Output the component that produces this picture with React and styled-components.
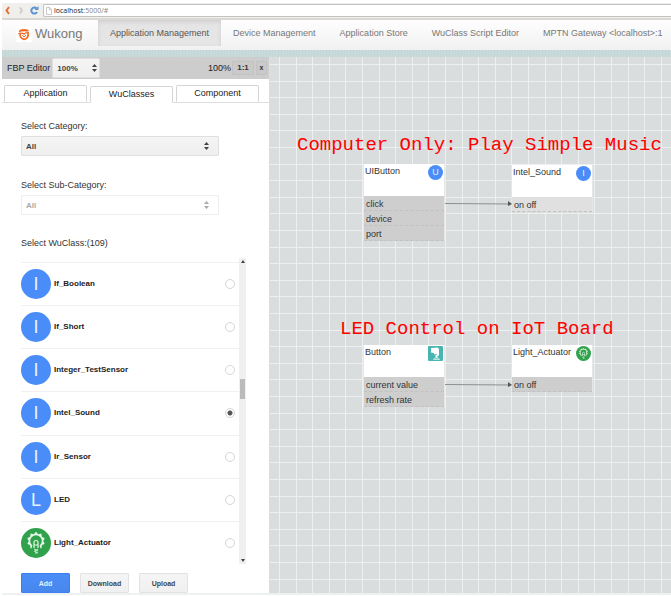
import React, { useState } from "react";
import styled, { createGlobalStyle, css } from "styled-components";

const Global = createGlobalStyle`
  *, *::before, *::after { box-sizing: border-box; }
  body { margin: 0; background: #fff; color: #333; font: 12px/16px "Liberation Sans", Arial, sans-serif; overflow: hidden; }
  button, select, input { font-family: inherit; margin: 0; }
`;

const Page = styled.div`
  display: flex;
  flex-direction: column;
  height: 100vh;
  padding: 3px 0 1px 2px;
`;

const BrowserBar = styled.header`
  display: flex;
  align-items: center;
  height: 17px;
  padding: 0 0 0 3px;
  background: #f1efec;
  border-bottom: 2px solid #d9d8d6;
`;

const ToolButton = styled.button`
  display: flex;
  padding: 0;
  border: 0;
  margin-right: 4px;
  background: none;
`;

const Address = styled.div`
  display: flex;
  align-items: center;
  flex: 1;
  height: 13px;
  padding-left: 2px;
  background: #fff;
  border: 1px solid #c4c3c1;
  border-right: 0;
  border-radius: 2px 0 0 2px;
  font: 7px/11px "Open Sans", sans-serif;
  color: #888;
`;

const AddressText = styled.span`
  margin-left: 2px;
  b { font-weight: 400; color: #222; }
`;

const Navbar = styled.nav`
  display: flex;
  flex: none;
  height: 30px;
  padding-left: 14px;
  background: linear-gradient(#fefefe, #f1f1f1);
  overflow: hidden;
`;

const Brand = styled.a`
  display: flex;
  align-items: center;
  flex: none;
  gap: 3px;
  width: 82px;
  padding-bottom: 2px;
  color: #777;
  font-size: 13px;
  text-decoration: none;
`;

const NavLink = styled.a`
  height: 26px;
  padding: 0 12px;
  color: ${(p) => (p.$active ? "#555" : "#777")};
  font-size: 9px;
  line-height: 26px;
  white-space: nowrap;
  text-decoration: none;
  ${(p) => p.$active && css`
    background: #e5e5e5;
    box-shadow: inset 0 2px 4px rgba(0, 0, 0, 0.1);
  `}
`;

const Strip = styled.div`
  flex: none;
  height: 7px;
  background: repeating-linear-gradient(90deg, #c4d5d5 0 1px, #c9dada 1px 3px);
`;

const Workspace = styled.main`
  display: grid;
  grid-template-columns: 268px minmax(0, 1fr);
  flex: 1;
  min-height: 0;
  border-bottom: 2px solid #eef1f1;
`;

const Sidebar = styled.aside`
  display: flex;
  flex-direction: column;
  min-width: 0;
  min-height: 0;
  background: #fff;
  border-right: 1px solid #ddd;
`;

const EditorBar = styled.div`
  display: flex;
  align-items: center;
  height: 22px;
  padding: 0 2px 0 5px;
  background: #cdcdcd;
  color: #222;
  font-size: 9px;
`;

const Spacer = styled.div`
  flex: 1;
`;

const SelectBox = styled.div`
  display: grid;
  grid-template-columns: minmax(0, 1fr) auto;
  align-items: center;
  width: ${(p) => p.$width};
  height: 20px;
  margin-left: ${(p) => (p.$inline ? "2px" : "0")};
  padding-right: ${(p) => (p.$inline ? "2px" : "9px")};
  border: 1px solid ${(p) => (p.$muted ? "#eee" : "#dfdfdf")};
  border-radius: 1px;
  background: ${(p) => (p.$muted ? "#fff" : "linear-gradient(#f4f4f4, #efefef)")};
  color: ${(p) => (p.$muted ? "#aaa" : "#444")};
`;

const Select = styled.select`
  grid-area: 1 / 1 / 2 / 3;
  width: 100%;
  height: 18px;
  padding: 0 4px;
  border: 0;
  background: none;
  appearance: none;
  color: inherit;
  opacity: 1;
  font-size: 8px;
  font-weight: 700;
`;

const Arrows = styled.svg`
  grid-area: 1 / 2 / 2 / 3;
  width: 5px;
  height: 8px;
  fill: currentColor;
  pointer-events: none;
`;

const TinyButton = styled.button`
  min-width: ${(p) => (p.$wide ? "22px" : "11px")};
  height: 14px;
  margin-left: ${(p) => (p.$wide ? "1px" : "2px")};
  padding: 0;
  border: 1px solid #c2c2c2;
  border-radius: 1px;
  background: #cacaca;
  color: #333;
  font-size: ${(p) => (p.$wide ? "8px" : "7px")};
  font-weight: 700;
  line-height: 12px;
`;

const Tabs = styled.div`
  display: flex;
  align-items: flex-end;
  gap: 3px;
  height: 24px;
  padding-left: 2px;
  border-bottom: 1px solid #ddd;
`;

const Tab = styled.button`
  width: 83px;
  height: 17px;
  margin-bottom: ${(p) => (p.$active ? "-1px" : "0")};
  padding: 0;
  border: 1px solid #d5d5d5;
  border-bottom-color: ${(p) => (p.$active ? "#fff" : "transparent")};
  border-radius: 2px 2px 0 0;
  background: #fff;
  color: #222;
  font-size: 9px;
  line-height: 15px;
`;

const Panel = styled.div`
  display: flex;
  flex-direction: column;
  flex: 1;
  min-height: 0;
  padding: 15px 23px 0 19px;
`;

const Field = styled.div`
  display: flex;
  flex-direction: column;
  gap: 2px;
  height: 59px;
`;

const Label = styled.label`
  color: #333;
  font-size: 9px;
  line-height: 16px;
`;

const ListTitle = styled.h3`
  margin: 0 0 7px;
  color: #333;
  font-size: 9px;
  font-weight: 400;
  line-height: 15px;
`;

const ClassList = styled.div`
  display: flex;
  flex: 1;
  min-height: 0;
`;

const Rows = styled.div`
  display: grid;
  grid-auto-rows: minmax(0, 1fr);
  flex: 1;
  padding-top: 4px;
`;

const Row = styled.label`
  display: flex;
  align-items: center;
  gap: 3px;
  border-top: 1px solid #f1f1f1;
  color: #222;
  font-size: 8px;
  font-weight: 700;
`;

const Avatar = styled.span`
  display: flex;
  align-items: center;
  justify-content: center;
  flex: none;
  width: ${(p) => p.$size}px;
  height: ${(p) => p.$size}px;
  border-radius: 50%;
  background: #4b8df8;
  color: #e8f1ff;
  font-size: ${(p) => (p.$size > 20 ? "18px" : "9px")};
  font-weight: 400;
  line-height: 1;
`;

const RowName = styled.span`
  flex: 1;
`;

const Radio = styled.input`
  appearance: none;
  width: 10px;
  height: 10px;
  && { margin: 0 4px 0 0; }
  border: 1px solid #d6d6d6;
  border-radius: 50%;
  background: #fff;
  &:checked { background: radial-gradient(circle, #555 0 2px, #fff 3px); }
`;

const Scrollbar = styled.div`
  display: flex;
  flex-direction: column;
  align-items: center;
  width: 7px;
  padding: 2px 1px;
  background: #f0f0f0;
  color: #444;
`;

const Thumb = styled.div`
  width: 5px;
  height: 20px;
  margin: auto 0 160px;
  background: #bbb;
`;

const ScrollArrow = styled.svg`
  flex: none;
  width: 4px;
  height: 3px;
  fill: currentColor;
`;

const Actions = styled.div`
  display: flex;
  gap: 10px;
  padding-top: 9px;
`;

const Action = styled.button`
  width: 49px;
  height: 20px;
  padding: 0;
  border: 1px solid ${(p) => (p.$primary ? "#3d7ff0" : "#e2e2e2")};
  border-radius: 1px;
  background: ${(p) => (p.$primary ? "linear-gradient(#4b8df8, #4787ed)" : "linear-gradient(#f5f5f5, #f0f0f0)")};
  color: ${(p) => (p.$primary ? "#e4efff" : "#444")};
  font-size: 7px;
  font-weight: 700;
`;

const grid = (dir) => `linear-gradient(${dir},
  #eef0f0 0 1px, transparent 1px 17px, #eef0f0 17px 18px, transparent 18px 33px,
  #eef0f0 33px 34px, transparent 34px 50px, #eef0f0 50px 51px, transparent 51px 66px,
  #eef0f0 66px 67px, transparent 67px)`;

const Canvas = styled.section`
  position: relative;
  overflow: hidden;
  background-color: #d9dddd;
  background-image: ${grid("90deg")}, ${grid("180deg")};
  background-size: 83px 83px;
  background-position: 9px 7px;
`;

const Caption = styled.h2`
  position: absolute;
  left: ${(p) => p.$x}px;
  top: ${(p) => p.$y}px;
  margin: 0;
  color: #f00;
  font: 400 19px/22px "Liberation Mono", "Courier New", monospace;
  white-space: nowrap;
`;

const Node = styled.article`
  position: absolute;
  left: ${(p) => p.$x}px;
  top: ${(p) => p.$y}px;
  width: 82px;
  border: 1px solid #e6e8e8;
  border-top: 0;
  border-bottom: 0;
`;

const NodeHead = styled.div`
  display: flex;
  justify-content: space-between;
  height: 32px;
  padding: 1px 1px 0 1px;
  background: #fff;
  color: #333;
  font-size: 9px;
  line-height: 13px;
`;

const Ports = styled.ul`
  margin: 0;
  padding: 0;
  list-style: none;
  background: ${(p) => (p.$light ? "#e0e0e0" : "#cecece")};
`;

const Port = styled.li`
  height: 15px;
  padding-left: 2px;
  border-bottom: 1px dashed #c2c2c2;
  color: #333;
  font-size: 9px;
  line-height: 16px;
`;

const Wire = styled.svg`
  position: absolute;
  left: 175px;
  top: ${(p) => p.$y}px;
  width: 67px;
  height: 7px;
`;

const UpDown = () => (
  <Arrows viewBox="0 0 10 16"><path d="M5 0l5 6H0zM5 16l5-6H0z" /></Arrows>
);

const rays = Array.from({ length: 20 }, (_, i) => {
  const a = (Math.PI * i) / 10;
  const r = i % 2 ? 7.2 : 9.2;
  return `${15 + r * Math.sin(a)},${13 - r * Math.cos(a)}`;
}).join(" ");

const Lamp = ({ size }) => (
  <svg width={size} height={size} viewBox="0 0 30 30" fill="none" stroke="#e5f7e8">
    <circle cx="15" cy="15" r="15" fill="#2fa24b" stroke="none" />
    <polygon points={rays} fill="#e5f7e8" stroke="none" />
    <circle cx="15" cy="13" r="5.8" fill="#2fa24b" stroke="none" />
    <path d="M11.500 17h7l2 7h-11z" fill="#2fa24b" stroke="none" />
    <path d="M13 20v-5.500q0-2 2-2t2 2V20M13 17h4" strokeWidth="1.200" />
    <path d="M13 21l4 2M13 23l4 2M17 21l-3 2M15 24v2" strokeWidth="0.900" />
  </svg>
);

const PressIcon = () => (
  <svg width="15" height="15" viewBox="0 0 30 30">
    <rect width="30" height="30" rx="2" fill="#48b5b1" />
    <path d="M6 4l13-1 3 3v13l-3 1-2-4-4 1-2-3-5-1z" fill="#fff" />
    <path d="M15 18h4v6h-4z" fill="#eaffff" />
    <path d="M11 27q0-3 6-3t6 3z" fill="none" stroke="#dff5f4" strokeWidth="1.500" />
  </svg>
);

const LogoMark = () => (
  <svg width="16" height="16" viewBox="0 0 48 48">
    <rect width="48" height="48" fill="#fff" />
    <path d="M8 19Q9 9 24 9q14 0 15 7-7 1-13 0-10 0-18 3z" fill="#f26a21" />
    <path d="M13 22q-4 14 11 18 15-3 12-19" fill="none" stroke="#f26a21" strokeWidth="5" />
    <path d="M7 23q11-4 17 1 6-6 15-3" fill="none" stroke="#f26a21" strokeWidth="4" />
    <path d="M19 28l5 5 6-6" fill="none" stroke="#f26a21" strokeWidth="3" />
  </svg>
);

const classes = ["If_Boolean", "If_Short", "Integer_TestSensor", "Intel_Sound", "Ir_Sensor", "LED", "Light_Actuator"];
const links = ["Application Management", "Device Management", "Application Store", "WuClass Script Editor", "MPTN Gateway <localhost>:1"];
const tabs = ["Application", "WuClasses", "Component"];
const nodes = [
  { name: "UIButton", x: 93, y: 107, ports: ["click", "device", "port"], icon: <Avatar $size={15}>U</Avatar> },
  { name: "Intel_Sound", x: 241, y: 108, ports: ["on off"], light: true, icon: <Avatar $size={15}>I</Avatar> },
  { name: "Button", x: 93, y: 288, ports: ["current value", "refresh rate"], icon: <PressIcon /> },
  { name: "Light_Actuator", x: 241, y: 288, ports: ["on off"], icon: <Lamp size={15} /> },
];

export default function App() {
  const [picked, setPicked] = useState("Intel_Sound");
  const [tab, setTab] = useState("WuClasses");
  return (
    <Page>
      <Global />
      <BrowserBar>
        <ToolButton aria-label="Back"><svg width="5" height="9" viewBox="0 0 10 18"><path d="M8 2L3 9l5 7" fill="none" stroke="#e0703a" strokeWidth="4" /></svg></ToolButton>
        <ToolButton aria-label="Forward"><svg width="12" height="9" viewBox="0 0 24 18"><path d="M12 3l4 6-4 6" fill="none" stroke="#c8c7c5" strokeWidth="3" /></svg></ToolButton>
        <ToolButton aria-label="Reload"><svg width="9" height="9" viewBox="0 0 18 18"><path d="M14 12a6 6 0 1 1-1-7" fill="none" stroke="#5b95cf" strokeWidth="4" /><path d="M9 8h8V0z" fill="#5b95cf" /></svg></ToolButton>
        <Address>
          <svg width="6" height="8" viewBox="0 0 14 18"><path d="M1 1h8l4 4v12H1zM8 1v5h5" fill="#fff" stroke="#aaa" strokeWidth="1.500" /></svg>
          <AddressText><b>localhost</b>:5000/#</AddressText>
        </Address>
      </BrowserBar>
      <Navbar>
        <Brand href="#"><LogoMark />Wukong</Brand>
        {links.map((l, i) => <NavLink key={l} href="#" $active={i === 0}>{l}</NavLink>)}
      </Navbar>
      <Strip />
      <Workspace>
        <Sidebar>
          <EditorBar>
            <span>FBP Editor</span>
            <SelectBox $width="48px" $inline>
              <Select aria-label="Zoom"><option>100%</option></Select>
              <UpDown />
            </SelectBox>
            <Spacer />
            <span>100%</span>
            <TinyButton $wide>1:1</TinyButton>
            <TinyButton>x</TinyButton>
          </EditorBar>
          <Tabs role="tablist">
            {tabs.map((t) => (
              <Tab key={t} role="tab" aria-selected={t === tab} $active={t === tab} onClick={() => setTab(t)}>{t}</Tab>
            ))}
          </Tabs>
          <Panel>
            <Field>
              <Label htmlFor="category">Select Category:</Label>
              <SelectBox $width="198px">
                <Select id="category"><option>All</option></Select>
                <UpDown />
              </SelectBox>
            </Field>
            <Field>
              <Label htmlFor="subcategory">Select Sub-Category:</Label>
              <SelectBox $width="198px" $muted>
                <Select id="subcategory" disabled><option>All</option></Select>
                <UpDown />
              </SelectBox>
            </Field>
            <ListTitle id="classes-title">Select WuClass:(109)</ListTitle>
            <ClassList role="radiogroup" aria-labelledby="classes-title">
              <Rows>
                {classes.map((c) => (
                  <Row key={c}>
                    {c === "Light_Actuator" ? <Lamp size={30} /> : <Avatar $size={30}>{c[0]}</Avatar>}
                    <RowName>{c}</RowName>
                    <Radio type="radio" name="wuclass" checked={picked === c} onChange={() => setPicked(c)} />
                  </Row>
                ))}
              </Rows>
              <Scrollbar>
                <ScrollArrow viewBox="0 0 4 3"><path d="M0 3l2-3 2 3z" /></ScrollArrow>
                <Thumb />
                <ScrollArrow viewBox="0 0 4 3"><path d="M0 0l2 3 2-3z" /></ScrollArrow>
              </Scrollbar>
            </ClassList>
            <Actions>
              <Action $primary>Add</Action>
              <Action>Download</Action>
              <Action>Upload</Action>
            </Actions>
          </Panel>
        </Sidebar>
        <Canvas>
          <Caption $x={27} $y={77}>Computer Only: Play Simple Music</Caption>
          <Caption $x={70} $y={261}>LED Control on IoT Board</Caption>
          {nodes.map((n) => (
            <Node key={n.name} $x={n.x} $y={n.y}>
              <NodeHead>{n.name}{n.icon}</NodeHead>
              <Ports $light={n.light}>{n.ports.map((p) => <Port key={p}>{p}</Port>)}</Ports>
            </Node>
          ))}
          {[143, 324].map((y) => (
            <Wire key={y} $y={y} viewBox="0 0 67 7"><path d="M0 3.500L65 4" stroke="#8b9090" /><path d="M63 1l4 3-4 2z" fill="#555" /></Wire>
          ))}
        </Canvas>
      </Workspace>
    </Page>
  );
}
